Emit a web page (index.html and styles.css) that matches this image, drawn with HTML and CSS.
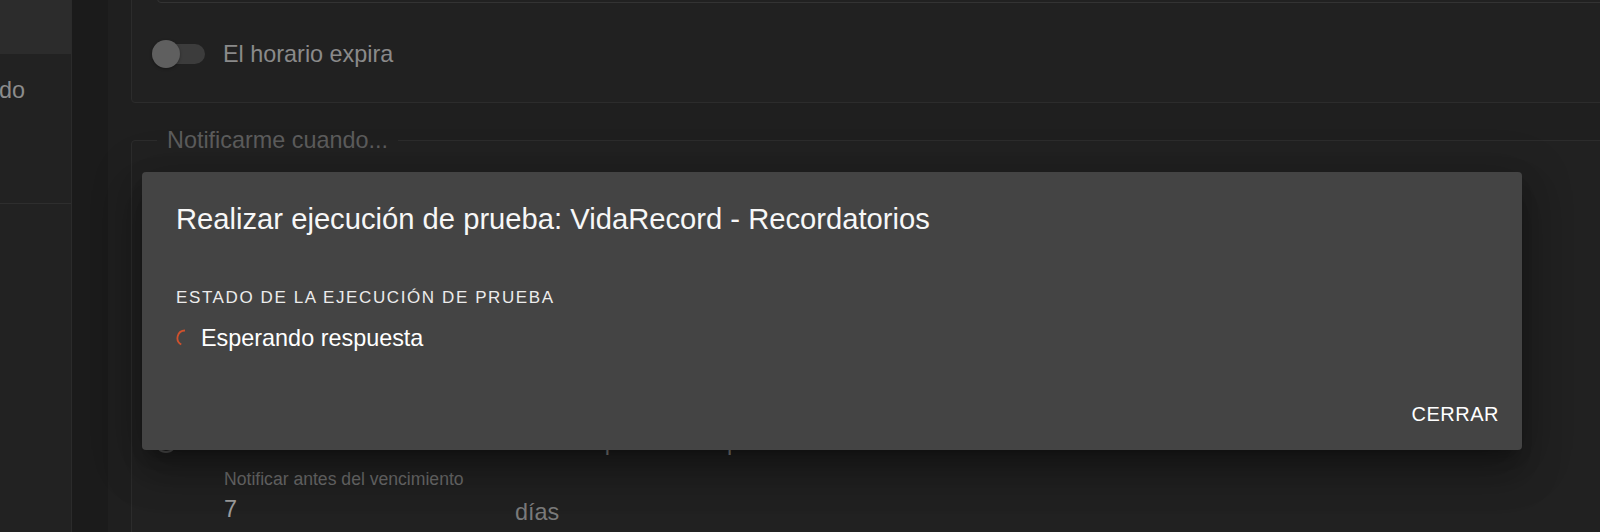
FILE: index.html
```html
<!DOCTYPE html>
<html lang="es">
<head>
<meta charset="utf-8">
<title>Ejecución de prueba</title>
<link rel="stylesheet" href="styles.css">
</head>
<body>
<div class="app">
  <aside class="sidebar">
    <div class="side-top"></div>
    <div class="side-item"><span>Programado</span></div>
  </aside>
  <div class="gutter"></div>
  <main class="main">
    <section class="card">
      <div class="field-box"></div>
      <div class="toggle-row">
        <span class="toggle"><span class="toggle-track"></span><span class="toggle-thumb"></span></span>
        <span class="toggle-label">El horario expira</span>
      </div>
    </section>
    <fieldset class="notify">
      <legend>Notificarme cuando...</legend>
      <div class="radio-row">
        <span class="radio"></span>
        <span class="radio-label">Recibir aviso cuando el horario esté a punto de expirar</span>
      </div>
      <div class="days-row">
        <div class="days-field">
          <div class="days-label">Notificar antes del vencimiento</div>
          <div class="days-value">7</div>
        </div>
        <div class="days-suffix">días</div>
      </div>
    </fieldset>
  </main>
</div>
<div class="dialog">
  <h2 class="dialog-title">Realizar ejecución de prueba: VidaRecord - Recordatorios</h2>
  <div class="dialog-content">
    <div class="status-label">Estado de la ejecución de prueba</div>
    <div class="status-row">
      <svg class="spinner" width="18" height="18" viewBox="0 0 18 18"><path d="M5.25 15.5 A7.5 7.5 0 0 1 9 1.5" fill="none" stroke="#cf512d" stroke-width="1.8"/></svg>
      <span class="status-text">Esperando respuesta</span>
    </div>
  </div>
  <div class="dialog-actions"><button class="btn">Cerrar</button></div>
</div>
</body>
</html>
```
FILE: styles.css
```css
html, body {
  margin: 0;
  padding: 0;
  width: 1600px;
  height: 532px;
  overflow: hidden;
  background: #1f1f1f;
  font-family: "Liberation Sans", Arial, sans-serif;
}

.app {
  display: flex;
  height: 532px;
  overflow: hidden;
}

.sidebar {
  width: 71px;
  flex: none;
  background: #222222;
  border-right: 1px solid #2b2b2b;
  display: flex;
  flex-direction: column;
}

.side-top {
  height: 54px;
  background: #2c2c2c;
}

.side-item {
  height: 127px;
  padding-top: 22px;
  padding-right: 46px;
  display: flex;
  justify-content: flex-end;
  align-items: flex-start;
  overflow: hidden;
  border-bottom: 1px solid #2e2e2e;
  font-size: 23.4px;
  line-height: 28px;
  color: #8c8c8c;
  white-space: nowrap;
}

.gutter {
  width: 36px;
  flex: none;
  background: #1b1b1b;
}

.main {
  flex: 1;
  padding-left: 23px;
  display: flex;
  flex-direction: column;
  min-width: 0;
}

.card {
  margin: -40px -20px 0 0;
  padding: 9px 0 34px 20px;
  background: #212121;
  border: 1px solid #2c2c2c;
  border-radius: 4px;
  flex: none;
}

.field-box {
  margin-left: 5px;
  height: 31px;
  border: 1px solid #333333;
  border-radius: 4px;
}

.toggle-row {
  margin-top: 37px;
  height: 28px;
  display: flex;
  align-items: center;
}

.toggle {
  position: relative;
  width: 53px;
  height: 28px;
  flex: none;
}

.toggle-track {
  position: absolute;
  left: 5px;
  top: 4px;
  width: 48px;
  height: 20px;
  border-radius: 10px;
  background: #3c3c3c;
}

.toggle-thumb {
  position: absolute;
  left: 0;
  top: 0;
  width: 28px;
  height: 28px;
  border-radius: 50%;
  background: #5f5f5f;
  box-shadow: 0 1px 3px rgba(0, 0, 0, 0.35);
}

.toggle-label {
  margin-left: 18px;
  font-size: 23.4px;
  line-height: 28px;
  color: #8a8a8a;
}

.notify {
  margin: 23px -20px 0 0;
  padding: 274px 0 80px 25px;
  border: 1px solid #2c2c2c;
  border-radius: 4px;
  background: #212121;
  min-width: 0;
  flex: none;
}

.notify legend {
  padding: 0 10px;
  font-size: 23.4px;
  line-height: 28px;
  color: #5c5c5c;
}

.radio-row {
  display: flex;
  align-items: center;
  height: 28px;
  margin-left: -2px;
  white-space: nowrap;
}

.radio {
  width: 18px;
  height: 18px;
  border: 2px solid #5a5a5a;
  border-radius: 50%;
  flex: none;
}

.radio-label {
  margin-left: 30px;
  font-size: 23.4px;
  line-height: 28px;
  color: #8a8a8a;
}

.days-row {
  display: flex;
  margin-top: 13px;
  margin-left: 67px;
}

.days-field {
  width: 291px;
}

.days-label {
  font-size: 17.6px;
  line-height: 20px;
  color: #6c6c6c;
}

.days-value {
  margin-top: 6px;
  font-size: 23.4px;
  line-height: 28px;
  color: #9c9c9c;
}

.days-suffix {
  margin-top: 29px;
  font-size: 23.4px;
  line-height: 28px;
  color: #7a7a7a;
}

.dialog {
  position: absolute;
  left: 142px;
  top: 172px;
  width: 1380px;
  height: 278px;
  box-sizing: border-box;
  padding: 29px 23px 0 34px;
  background: #444444;
  border-radius: 4px;
  box-shadow: 0 11px 15px -7px rgba(0, 0, 0, 0.3),
              0 24px 38px 3px rgba(0, 0, 0, 0.2),
              0 9px 46px 8px rgba(0, 0, 0, 0.18);
  display: flex;
  flex-direction: column;
  color: #ffffff;
}

.dialog-title {
  margin: 0;
  font-size: 29.2px;
  line-height: 36px;
  font-weight: normal;
  color: #f7f7f7;
}

.dialog-content {
  margin-top: 51px;
}

.status-label {
  font-size: 17px;
  line-height: 20px;
  letter-spacing: 1.6px;
  text-transform: uppercase;
  color: #ececec;
}

.status-row {
  margin-top: 16px;
  display: flex;
  align-items: center;
  height: 28px;
}

.spinner {
  display: block;
  flex: none;
}

.status-text {
  margin-left: 7px;
  font-size: 23.4px;
  line-height: 28px;
  color: #ffffff;
}

.dialog-actions {
  margin-top: 50px;
  display: flex;
  justify-content: flex-end;
}

.btn {
  padding: 0;
  border: 0;
  background: none;
  font-family: "Liberation Sans", Arial, sans-serif;
  font-size: 20px;
  line-height: 24px;
  letter-spacing: 0.5px;
  text-transform: uppercase;
  color: #ffffff;
}
```
